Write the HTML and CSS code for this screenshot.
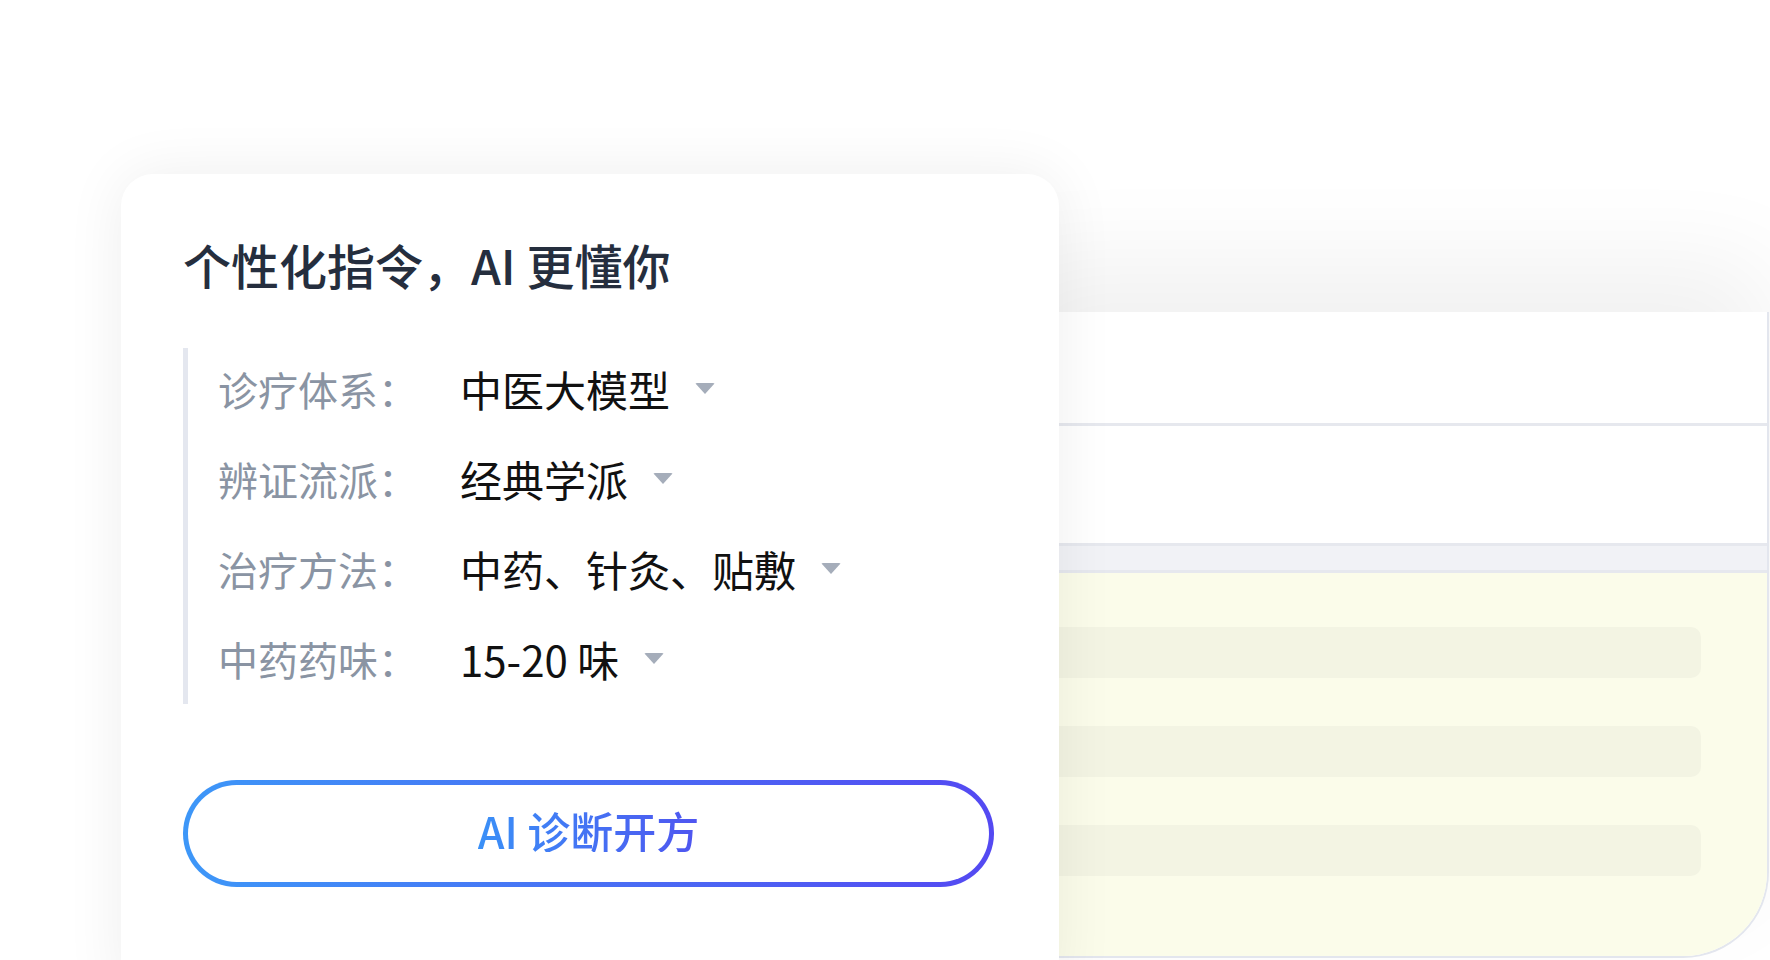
FILE: index.html
```html
<!DOCTYPE html>
<html lang="zh-CN">
<head>
<meta charset="utf-8">
<title>个性化指令，AI 更懂你</title>
<link rel="stylesheet" href="styles.css">
</head>
<body>
<div class="stage">
  <section class="panel" aria-hidden="true">
    <div class="panel-row"></div>
    <div class="panel-row panel-row--tall"></div>
    <div class="panel-band"></div>
    <div class="panel-body">
      <div class="panel-bar"></div>
      <div class="panel-bar"></div>
      <div class="panel-bar"></div>
    </div>
  </section>

  <section class="card">
    <h2 class="card-title">个性化指令，AI 更懂你</h2>
    <ul class="options">
      <li class="option">
        <span class="option-label">诊疗体系：</span>
        <span class="option-value">中医大模型</span>
        <span class="caret"></span>
      </li>
      <li class="option">
        <span class="option-label">辨证流派：</span>
        <span class="option-value">经典学派</span>
        <span class="caret"></span>
      </li>
      <li class="option">
        <span class="option-label">治疗方法：</span>
        <span class="option-value">中药、针灸、贴敷</span>
        <span class="caret"></span>
      </li>
      <li class="option">
        <span class="option-label">中药药味：</span>
        <span class="option-value">15-20 味</span>
        <span class="caret"></span>
      </li>
    </ul>
    <button class="cta" type="button"><span class="cta-text">AI 诊断开方</span></button>
  </section>
</div>
</body>
</html>
```

FILE: styles.css
```css
html, body {
  margin: 0;
  padding: 0;
  background: #ffffff;
  overflow: hidden;
}

body {
  font-family: "Noto Sans CJK SC", "Noto Sans", "Liberation Sans", sans-serif;
}

.stage {
  display: grid;
  width: 1770px;
  height: 960px;
  overflow: hidden;
}

.panel,
.card {
  grid-area: 1 / 1;
  align-self: start;
  justify-self: start;
}

/* Background mock window */
.panel {
  margin: 312px 0 0 1000px;
  width: 769px;
  height: 646px;
  box-sizing: border-box;
  background: #ffffff;
  border-right: 2px solid #e3e6ee;
  border-bottom: 2px solid #e3e6ee;
  border-bottom-right-radius: 86px;
  box-shadow: 0 -50px 100px rgba(0, 0, 0, 0.06);
  display: flex;
  flex-direction: column;
  overflow: hidden;
}

.panel-row {
  height: 111px;
  border-bottom: 3px solid #e6e8ee;
  flex: none;
}

.panel-row--tall {
  height: 117px;
}

.panel-band {
  height: 24px;
  background: #f1f2f6;
  border-bottom: 3px solid #e6e8ee;
  flex: none;
}

.panel-body {
  flex: 1;
  background: #fbfcea;
  padding: 54px 66px 0 0;
  display: flex;
  flex-direction: column;
  gap: 48px;
}

.panel-bar {
  height: 51px;
  background: #f3f4e3;
  border-radius: 0 10px 10px 0;
}

/* Foreground card */
.card {
  z-index: 1;
  margin: 174px 0 0 121px;
  width: 938px;
  height: 820px;
  box-sizing: border-box;
  padding: 66px 65px 0 62px;
  background: #ffffff;
  border-radius: 32px 32px 0 0;
  box-shadow: 0 0 60px rgba(0, 0, 0, 0.07);
}

.card-title {
  margin: 0;
  font-size: 48px;
  line-height: 48px;
  font-weight: 500;
  color: #252e3e;
  white-space: nowrap;
}

.options {
  list-style: none;
  margin: 60px 0 0;
  padding: 0 0 0 30px;
  border-left: 5px solid #e4e7ef;
  display: flex;
  flex-direction: column;
  gap: 4px;
}

.option {
  height: 86px;
  box-sizing: border-box;
  padding-bottom: 5px;
  display: flex;
  align-items: center;
  font-size: 40px;
  white-space: nowrap;
}

.option-label {
  width: 242px;
  flex: none;
  color: #8a94a3;
}

.option-value {
  font-size: 42px;
  color: #111111;
}

.caret {
  width: 0;
  height: 0;
  margin-left: 25px;
  border-left: 10px solid transparent;
  border-right: 10px solid transparent;
  border-top: 11px solid #a5adba;
  border-radius: 2px;
}

.cta {
  display: flex;
  align-items: center;
  justify-content: center;
  margin-top: 76px;
  width: 100%;
  height: 107px;
  box-sizing: border-box;
  padding: 0 0 6px;
  border: 5px solid transparent;
  border-radius: 60px;
  background:
    linear-gradient(#ffffff, #ffffff) padding-box,
    linear-gradient(90deg, #3d97f8 0%, #4a6cf4 55%, #5449f2 100%) border-box;
  font-family: inherit;
  cursor: pointer;
}

.cta-text {
  font-size: 43px;
  line-height: 1;
  font-weight: 500;
  background: linear-gradient(90deg, #3a90f7, #4f55f0);
  -webkit-background-clip: text;
  background-clip: text;
  color: transparent;
}
```
